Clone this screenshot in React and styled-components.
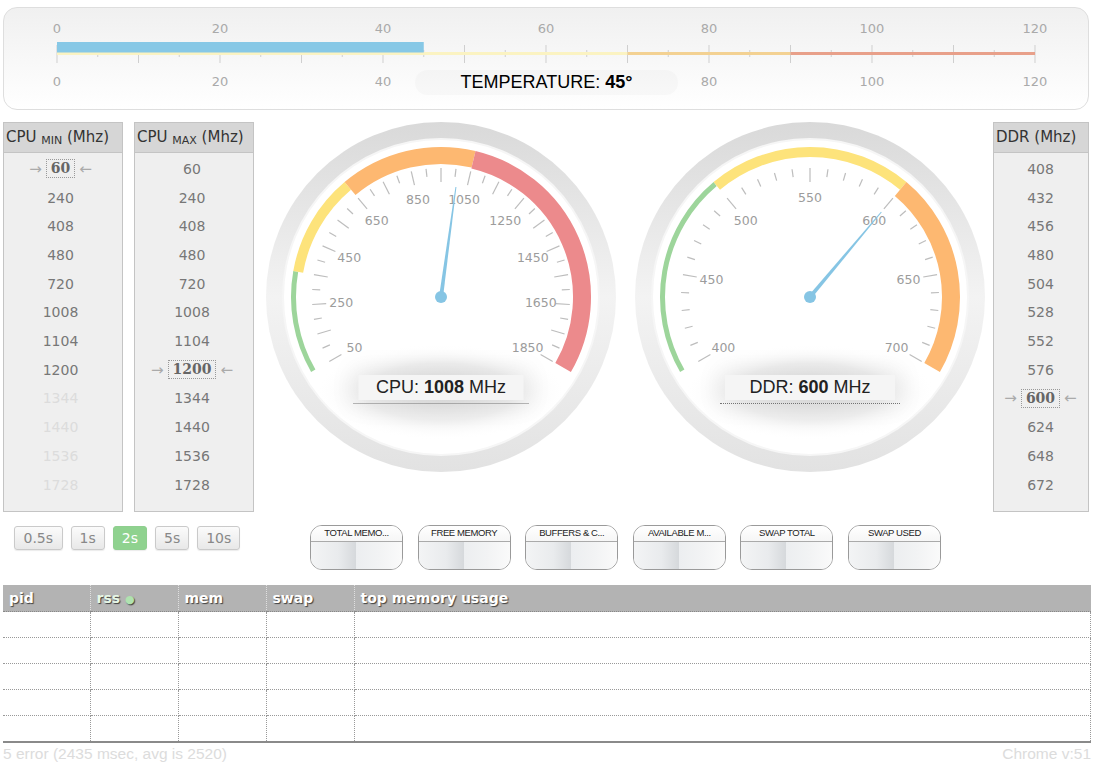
import React from 'react'
import styled, { createGlobalStyle } from 'styled-components'

const GlobalStyle = createGlobalStyle`
  body {
    margin: 0;
    background: #fff;
    font-family: "DejaVu Sans", Verdana, sans-serif;
  }
`

const SCALE_X0 = 57
const SCALE_UNIT = 8.15

const cpuMin = [
  { v: 60, sel: true }, { v: 240 }, { v: 408 }, { v: 480 }, { v: 720 }, { v: 1008 },
  { v: 1104 }, { v: 1200 }, { v: 1344, off: true }, { v: 1440, off: true },
  { v: 1536, off: true }, { v: 1728, off: true },
]
const cpuMax = [
  { v: 60 }, { v: 240 }, { v: 408 }, { v: 480 }, { v: 720 }, { v: 1008 },
  { v: 1104 }, { v: 1200, sel: true }, { v: 1344 }, { v: 1440 }, { v: 1536 }, { v: 1728 },
]
const ddrList = [408, 432, 456, 480, 504, 528, 552, 576, 600, 624, 648, 672].map(v => ({ v, sel: v === 600 }))

const intervals = ['0.5s', '1s', '2s', '5s', '10s']
const memButtons = ['TOTAL MEMO...', 'FREE MEMORY', 'BUFFERS & C...', 'AVAILABLE M...', 'SWAP TOTAL', 'SWAP USED']

const cpuGauge = {
  id: 'cpu', min: 50, max: 1850, minor: 50, major: 100, labelStep: 200, value: 1008,
  name: 'CPU', unit: 'MHz', labelWidth: 165,
  bands: [
    [-120, -80, '#9dd59b', 5],
    [-80, -40, '#fde37b', 10],
    [-40, 13.3, '#fdb871', 17],
    [13.3, 120, '#ec8a8c', 18],
  ],
}
const ddrGauge = {
  id: 'ddr', min: 400, max: 700, minor: 10, major: 50, labelStep: 50, value: 600,
  name: 'DDR', unit: 'MHz', labelWidth: 170,
  bands: [
    [-120, -40, '#9dd59b', 5],
    [-40, 40, '#fde37b', 10],
    [40, 120, '#fdb871', 18],
  ],
}

const polar = (a, r, c = 175) => {
  const rad = (a * Math.PI) / 180
  return [c + r * Math.sin(rad), c - r * Math.cos(rad)]
}

const arc = (a0, a1, r) => {
  const [x0, y0] = polar(a0, r)
  const [x1, y1] = polar(a1, r)
  const large = a1 - a0 > 180 ? 1 : 0
  return `M${x0} ${y0} A${r} ${r} 0 ${large} 1 ${x1} ${y1}`
}

const TempScale = () => {
  const ticks = []
  for (let u = 0; u <= 120; u += 5) {
    const x = SCALE_X0 + u * SCALE_UNIT
    const long = u % 10 === 0
    ticks.push(<line key={u} x1={x} x2={x} y1={long ? 45 : 50} y2={long ? 63 : 57} stroke="#cfcfcf" strokeWidth="1" />)
  }
  const labels = [0, 20, 40, 60, 80, 100, 120]
  const seg = (a, b, color) => (
    <line x1={SCALE_X0 + a * SCALE_UNIT} x2={SCALE_X0 + b * SCALE_UNIT} y1="53.5" y2="53.5" stroke={color} strokeWidth="3" />
  )
  return (
    <svg width="1084" height="101" viewBox="4 8 1084 101" style={{ display: 'block' }}>
      {ticks}
      {seg(0, 70, '#fbf3c2')}
      {seg(70, 90, '#f3d192')}
      {seg(90, 120, '#e8a08a')}
      <rect x={SCALE_X0} y="42" width={45 * SCALE_UNIT} height="10.5" fill="#87c8e6" />
      {labels.map(l => (
        <g key={l} fontFamily="DejaVu Sans, sans-serif" fontSize="13" fill="#aaa" textAnchor="middle">
          <text x={SCALE_X0 + l * SCALE_UNIT} y="33">{l}</text>
          {l !== 60 && <text x={SCALE_X0 + l * SCALE_UNIT} y="86">{l}</text>}
        </g>
      ))}
    </svg>
  )
}

const GaugeDial = ({ g }) => {
  const toAngle = v => ((v - g.min) / (g.max - g.min)) * 240 - 120
  const ticks = []
  const labels = []
  for (let v = g.min; v <= g.max + 0.01; v += g.minor) {
    const a = toAngle(v)
    const long = (v - g.min) % g.major === 0
    const [x1, y1] = polar(a, 129)
    const [x2, y2] = polar(a, long ? 115 : 121)
    ticks.push(<line key={v} x1={x1} y1={y1} x2={x2} y2={y2} stroke="#bdbdbd" strokeWidth="1.2" />)
    if ((v - g.min) % g.labelStep === 0) {
      const [lx, ly] = polar(a, 100)
      labels.push(
        <text key={v} x={lx} y={ly + 4.5} textAnchor="middle" fontFamily="DejaVu Sans, sans-serif" fontSize="12.5" fill="#9c9c9c">{v}</text>
      )
    }
  }
  const na = toAngle(g.value)
  const [tx, ty] = polar(na, 111)
  const [b1x, b1y] = polar(na - 90, 2)
  const [b2x, b2y] = polar(na + 90, 2)
  const [t1x, t1y] = [tx + (b1x - 175) * 0.25, ty + (b1y - 175) * 0.25]
  const [t2x, t2y] = [tx + (b2x - 175) * 0.25, ty + (b2y - 175) * 0.25]
  return (
    <svg width="350" height="350" viewBox="0 0 350 350" style={{ display: 'block' }}>
      <defs>
        <linearGradient id={`rim-${g.id}`} x1="0" y1="0" x2="0" y2="1">
          <stop offset="0" stopColor="#d9d9d9" />
          <stop offset="0.5" stopColor="#f3f3f3" />
          <stop offset="1" stopColor="#e2e2e2" />
        </linearGradient>
        <radialGradient id={`glow-${g.id}`} cx="0.5" cy="0.5" r="0.5">
          <stop offset="0" stopColor="#dcdcdc" />
          <stop offset="0.6" stopColor="#efefef" />
          <stop offset="1" stopColor="#ffffff" stopOpacity="0" />
        </radialGradient>
      </defs>
      <circle cx="175" cy="175" r="175" fill={`url(#rim-${g.id})`} />
      <circle cx="175" cy="175" r="159" fill="#f6f6f6" />
      <circle cx="175" cy="175" r="157" fill="#fff" />
      <ellipse cx="175" cy="270" rx="125" ry="48" fill={`url(#glow-${g.id})`} />
      {g.bands.map(([a0, a1, color, t]) => (
        <path key={a0} d={arc(a0, a1, 150 - t / 2)} stroke={color} strokeWidth={t} fill="none" />
      ))}
      {ticks}
      {labels}
      <polygon points={`${b1x},${b1y} ${b2x},${b2y} ${t2x},${t2y} ${t1x},${t1y}`} fill="#86c5e4" />
      <circle cx="175" cy="175" r="6" fill="#86c5e4" />
    </svg>
  )
}

const Gauge = ({ g }) => (
  <GaugeWrap>
    <GaugeDial g={g} />
    <GaugeLabel>
      <GaugeValue width={g.labelWidth}>
        {g.name}: <b>{g.value}</b> {g.unit}
      </GaugeValue>
    </GaugeLabel>
  </GaugeWrap>
)

const FreqList = ({ title, sub, items, width, shift }) => (
  <ListPanel width={width}>
    <ListHeader>
      {title}
      {sub && <Sub>{sub}</Sub>} (Mhz)
    </ListHeader>
    <ListBody shift={shift}>
      {items.map(it => (
        <ListItem key={it.v} off={it.off ? 1 : 0}>
          {it.sel ? (
            <>
              <Arrow>→</Arrow>
              <Selected>{it.v}</Selected>
              <Arrow>←</Arrow>
            </>
          ) : (
            it.v
          )}
        </ListItem>
      ))}
    </ListBody>
  </ListPanel>
)

const App = () => {
  return (
    <>
      <GlobalStyle />
      <Page>
        <TempPanel>
          <TempScale />
          <TempPill>
            TEMPERATURE: <b>45°</b>
          </TempPill>
        </TempPanel>

        <MainRow>
          <LeftCol>
            <ListsRow>
              <FreqList title="CPU " sub="MIN" items={cpuMin} width={120} shift={5} />
              <FreqList title="CPU " sub="MAX" items={cpuMax} width={120} shift={4} />
            </ListsRow>
            <IntervalRow>
              {intervals.map(i => (
                <IntervalButton key={i} active={i === '2s' ? 1 : 0}>{i}</IntervalButton>
              ))}
            </IntervalRow>
          </LeftCol>

          <CenterCol>
            <GaugesRow>
              <Gauge g={cpuGauge} />
              <Gauge g={ddrGauge} />
            </GaugesRow>
            <MemRow>
              {memButtons.map(m => (
                <MemButton key={m}>
                  <MemTitle>{m}</MemTitle>
                  <MemBody />
                </MemButton>
              ))}
            </MemRow>
          </CenterCol>

          <RightCol>
            <FreqList title="DDR" items={ddrList} width={96} shift={1} />
          </RightCol>
        </MainRow>

        <ProcTable>
          <colgroup>
            <col style={{ width: 87 }} />
            <col style={{ width: 88 }} />
            <col style={{ width: 88 }} />
            <col style={{ width: 88 }} />
            <col />
          </colgroup>
          <thead>
            <tr>
              <Th>pid</Th>
              <Th sorted={1}>rss <Dot>●</Dot></Th>
              <Th>mem</Th>
              <Th>swap</Th>
              <Th>top memory usage</Th>
            </tr>
          </thead>
          <tbody>
            {[0, 1, 2, 3, 4].map(r => (
              <tr key={r}>
                {[0, 1, 2, 3, 4].map(c => <Td key={c} />)}
              </tr>
            ))}
          </tbody>
        </ProcTable>

        <Footer>
          <span>5 error (2435 msec, avg is 2520)</span>
          <span>Chrome v:51</span>
        </Footer>
      </Page>
    </>
  )
}

const Page = styled.div`
  width: 1096px;
  box-sizing: border-box;
  padding: 7px 5px 0 3px;
`

const TempPanel = styled.div`
  position: relative;
  width: 1086px;
  height: 103px;
  box-sizing: border-box;
  border: 1px solid #dedede;
  border-radius: 14px;
  background: linear-gradient(#f0f0f0, #ffffff);
`

const TempPill = styled.div`
  position: absolute;
  left: 411px;
  top: 62px;
  width: 263px;
  height: 25px;
  line-height: 25px;
  border-radius: 12px;
  background: rgba(0, 0, 0, 0.018);
  text-align: center;
  font-family: "Liberation Sans", Arial, sans-serif;
  font-size: 18px;
  color: #000;
`

const MainRow = styled.div`
  display: flex;
  align-items: flex-start;
  margin-top: 12px;
`

const LeftCol = styled.div`
  width: 251px;
  flex-shrink: 0;
`

const ListsRow = styled.div`
  display: flex;
  gap: 11px;
`

const CenterCol = styled.div`
  width: 739px;
  flex-shrink: 0;
  box-sizing: border-box;
  padding-left: 4px;
`

const RightCol = styled.div`
  width: 96px;
  flex-shrink: 0;
`

const ListPanel = styled.div`
  width: ${p => p.width}px;
  height: 390px;
  box-sizing: border-box;
  border: 1px solid #c4c4c4;
  background: #efefef;
`

const ListHeader = styled.div`
  height: 29px;
  line-height: 29px;
  padding-left: 2px;
  background: #d6d6d6;
  border-bottom: 1px solid #c4c4c4;
  font-size: 15px;
  color: #333;
  white-space: nowrap;
`

const Sub = styled.span`
  font-size: 11px;
  vertical-align: -2px;
`

const ListBody = styled.div`
  padding-top: 1.6px;
  padding-right: ${p => p.shift || 0}px;
`

const ListItem = styled.div`
  height: 28.7px;
  display: flex;
  align-items: center;
  justify-content: center;
  font-size: 14px;
  color: ${p => (p.off ? '#dcdcdc' : '#777')};
`

const Arrow = styled.span`
  color: #aaa;
  font-size: 15px;
  margin: 0 4px;
`

const Selected = styled.span`
  border: 1px dotted #999;
  padding: 0 4px;
  line-height: 17px;
  font-family: "DejaVu Serif", Georgia, serif;
  font-weight: bold;
  font-size: 14px;
  color: #666;
`

const IntervalRow = styled.div`
  display: flex;
  gap: 8px;
  margin-top: 14px;
  padding-left: 11px;
`

const IntervalButton = styled.div`
  height: 24px;
  box-sizing: border-box;
  line-height: 22px;
  padding: 0 8px;
  border: 1px solid ${p => (p.active ? '#8fcf8f' : '#cacaca')};
  border-radius: 3px;
  background: ${p => (p.active ? '#8fd28f' : 'linear-gradient(#fbfbfb, #e8e8e8)')};
  box-shadow: 0 1px 1px rgba(0, 0, 0, 0.08);
  font-size: 14px;
  color: ${p => (p.active ? '#fff' : '#888')};
  &:first-child {
    padding: 0 8.5px;
  }
`

const GaugesRow = styled.div`
  display: flex;
  justify-content: center;
  gap: 19px;
`

const GaugeWrap = styled.div`
  position: relative;
  width: 350px;
  height: 350px;
`

const GaugeLabel = styled.div`
  position: absolute;
  top: 253px;
  left: 50%;
  transform: translateX(-50%);
  padding: 0 5px 3px;
  border-bottom: 1px dotted #777;
`

const GaugeValue = styled.div`
  width: ${p => p.width}px;
  height: 25px;
  line-height: 25px;
  text-align: center;
  background: #f5f5f5;
  box-shadow: 0 0 24px 8px rgba(0, 0, 0, 0.05);
  font-family: "Liberation Sans", Arial, sans-serif;
  font-size: 18px;
  color: #222;
  white-space: nowrap;
`

const MemRow = styled.div`
  display: flex;
  justify-content: center;
  gap: 14.6px;
  margin-top: 53px;
`

const MemButton = styled.div`
  width: 93px;
  height: 45px;
  box-sizing: border-box;
  border: 1px solid #9a9a9a;
  border-radius: 12px;
  overflow: hidden;
  display: flex;
  flex-direction: column;
  background: #fff;
`

const MemTitle = styled.div`
  height: 15px;
  line-height: 14px;
  border-bottom: 1px solid #aaa;
  background: linear-gradient(#ffffff, #f6f6f6);
  text-align: center;
  font-family: "Liberation Sans", Arial, sans-serif;
  font-size: 9.5px;
  letter-spacing: -0.4px;
  color: #222;
  white-space: nowrap;
`

const MemBody = styled.div`
  flex: 1;
  background: linear-gradient(
    to right,
    #f3f4f5 0%,
    #e9ebed 30%,
    #d6d9dc 49%,
    #eceef0 50%,
    #f2f3f4 75%,
    #fafafa 100%
  );
`

const ProcTable = styled.table`
  width: 1088px;
  margin-top: 15px;
  border-collapse: collapse;
  table-layout: fixed;
  border-bottom: 2px solid #8a8a8a;
`

const Th = styled.th`
  height: 26px;
  padding: 0 6px;
  text-align: left;
  background: #b3b3b3;
  border-right: 1px dotted #e0e0e0;
  border-bottom: 1px dotted #888;
  font-size: 14px;
  font-weight: bold;
  color: ${p => (p.sorted ? '#e6f7e6' : '#fff')};
  text-shadow: 1px 1px 1px rgba(0, 0, 0, 0.65);
  white-space: nowrap;
  &:last-child {
    border-right: none;
  }
`

const Dot = styled.span`
  color: #b0e2b0;
  font-size: 11px;
`

const Td = styled.td`
  height: 25px;
  padding: 0;
  border: 1px dotted #999;
  border-top: none;
  &:first-child {
    border-left: none;
  }
`

const Footer = styled.div`
  display: flex;
  justify-content: space-between;
  margin-top: 3px;
  font-family: "Liberation Sans", Arial, sans-serif;
  font-size: 15.5px;
  line-height: 16px;
  color: #dcdcdc;
`

export default App
